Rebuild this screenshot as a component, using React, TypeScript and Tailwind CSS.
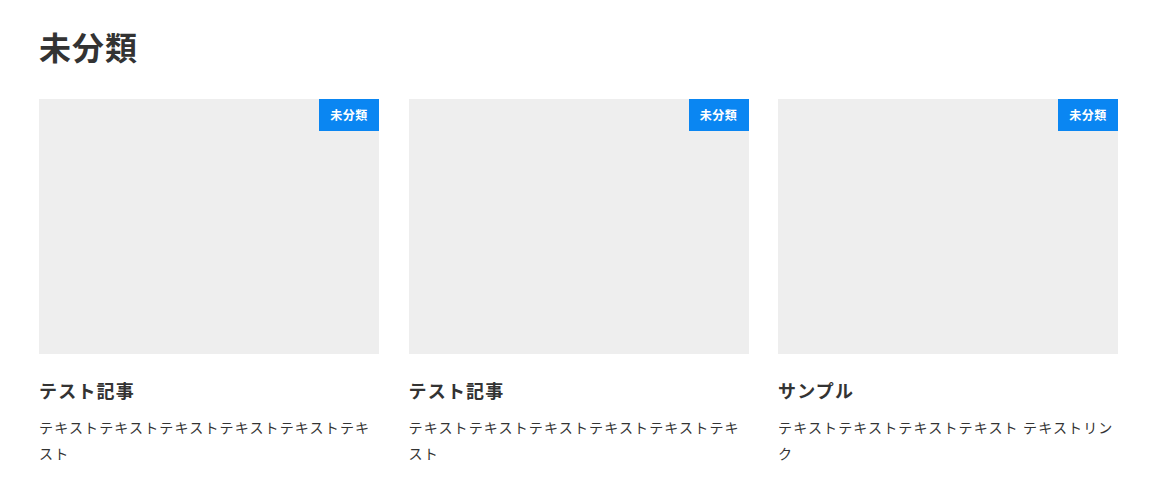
import React from "react";

const cards = [
  { title: "テスト記事", body: "テキストテキストテキストテキストテキストテキスト" },
  { title: "テスト記事", body: "テキストテキストテキストテキストテキストテキスト" },
  { title: "サンプル", body: "テキストテキストテキストテキスト テキストリンク" },
];

export default function App() {
  return (
    <div
      className="bg-white min-h-[481px] px-[39px] pt-[22px] text-[#333333]"
      style={{ fontFamily: '"Noto Sans CJK JP", "Noto Sans", sans-serif' }}
    >
      <h1 className="text-[32px] font-bold leading-[48px] tracking-[1px] mb-[29px]">未分類</h1>
      <div className="grid grid-cols-3 gap-x-[29.5px] w-[1079px]">
        {cards.map((c, i) => (
          <div key={i} className="flex flex-col">
            <div className="relative h-[255px] bg-[#eeeeee]">
              <span className="absolute top-0 right-0 w-[60px] h-[32px] flex items-center justify-center bg-[#0a86f2] text-white text-[12px] font-bold tracking-[0.5px]">
                未分類
              </span>
            </div>
            <h2 className="mt-[23px] text-[18px] font-bold leading-[27px] tracking-[1.2px]">{c.title}</h2>
            <p className="mt-[10px] text-[14px] leading-[26px] tracking-[1.15px]">{c.body}</p>
          </div>
        ))}
      </div>
    </div>
  );
}
